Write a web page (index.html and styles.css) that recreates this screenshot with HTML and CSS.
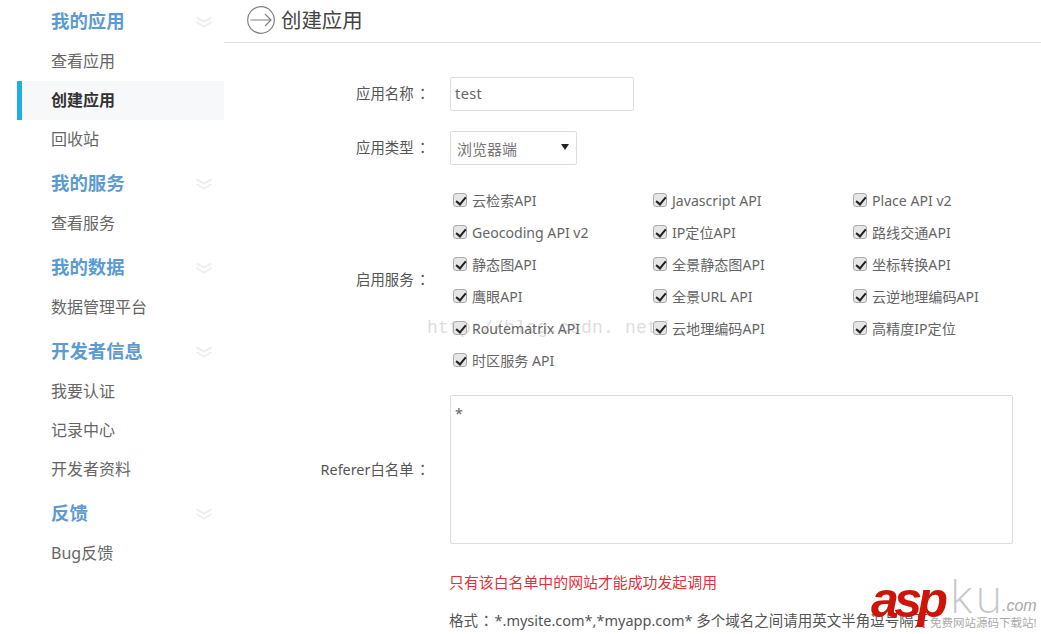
FILE: index.html
```html
<!DOCTYPE html>
<html lang="zh-CN">
<head>
<meta charset="utf-8">
<title>创建应用</title>
<link rel="stylesheet" href="styles.css">
</head>
<body>
<div class="page">
  <aside class="side">
    <div class="group first"><span>我的应用</span><svg class="chev" viewBox="0 0 18 12"><path d="M1.500 1.500l7.500 4 7.500-4M1.500 6l7.500 4.500 7.500-4.500"/></svg></div>
    <a class="item">查看应用</a>
    <a class="item active">创建应用</a>
    <a class="item">回收站</a>
    <div class="group"><span>我的服务</span><svg class="chev" viewBox="0 0 18 12"><path d="M1.500 1.500l7.500 4 7.500-4M1.500 6l7.500 4.500 7.500-4.500"/></svg></div>
    <a class="item">查看服务</a>
    <div class="group"><span>我的数据</span><svg class="chev" viewBox="0 0 18 12"><path d="M1.500 1.500l7.500 4 7.500-4M1.500 6l7.500 4.500 7.500-4.500"/></svg></div>
    <a class="item">数据管理平台</a>
    <div class="group"><span>开发者信息</span><svg class="chev" viewBox="0 0 18 12"><path d="M1.500 1.500l7.500 4 7.500-4M1.500 6l7.500 4.500 7.500-4.500"/></svg></div>
    <a class="item">我要认证</a>
    <a class="item">记录中心</a>
    <a class="item">开发者资料</a>
    <div class="group"><span>反馈</span><svg class="chev" viewBox="0 0 18 12"><path d="M1.500 1.500l7.500 4 7.500-4M1.500 6l7.500 4.500 7.500-4.500"/></svg></div>
    <a class="item">Bug反馈</a>
  </aside>
  <main class="main">
    <header class="head">
      <svg class="arrow" viewBox="0 0 28 28"><circle cx="14" cy="14" r="13.300"/><path d="M3.500 14h20.500M18 8l6 6-6 6"/></svg>
      <h1>创建应用</h1>
    </header>
    <form class="form">
      <label class="lab">应用名称<span class="colon" lang="zh-TW">：</span></label>
      <div class="ctl"><input class="txt" type="text" value="test"></div>
      <label class="lab">应用类型<span class="colon" lang="zh-TW">：</span></label>
      <div class="ctl"><div class="sel"><span>浏览器端</span><i class="caret"></i></div></div>
      <label class="lab">启用服务<span class="colon" lang="zh-TW">：</span></label>
      <div class="svc">
        <label class="chk"><input type="checkbox" checked>云检索API</label>
        <label class="chk"><input type="checkbox" checked>Javascript API</label>
        <label class="chk"><input type="checkbox" checked>Place API v2</label>
        <label class="chk"><input type="checkbox" checked>Geocoding API v2</label>
        <label class="chk"><input type="checkbox" checked>IP定位API</label>
        <label class="chk"><input type="checkbox" checked>路线交通API</label>
        <label class="chk"><input type="checkbox" checked>静态图API</label>
        <label class="chk"><input type="checkbox" checked>全景静态图API</label>
        <label class="chk"><input type="checkbox" checked>坐标转换API</label>
        <label class="chk"><input type="checkbox" checked>鹰眼API</label>
        <label class="chk"><input type="checkbox" checked>全景URL API</label>
        <label class="chk"><input type="checkbox" checked>云逆地理编码API</label>
        <label class="chk"><input type="checkbox" checked>Routematrix API</label>
        <label class="chk"><input type="checkbox" checked>云地理编码API</label>
        <label class="chk"><input type="checkbox" checked>高精度IP定位</label>
        <label class="chk"><input type="checkbox" checked>时区服务 API</label>
      </div>
      <label class="lab">Referer白名单<span class="colon" lang="zh-TW">：</span></label>
      <div class="ctl"><textarea class="area">*</textarea></div>
      <div class="notes">
        <p class="warn">只有该白名单中的网站才能成功发起调用</p>
        <p class="fmt">格式<span class="colon" lang="zh-TW">：</span>*.mysite.com*,*myapp.com* 多个域名之间请用英文半角逗号隔开</p>
      </div>
    </form>
  </main>
</div>
<div class="mark">http://blog.csdn. net/</div>
<div class="logo"><span class="ku">ku</span><span class="com">.com</span><span class="tag">免费网站源码下载站!</span><span class="asp">asp</span></div>
</body>
</html>
```
FILE: styles.css
```css
* { box-sizing: border-box; }
html, body { margin: 0; height: 634px; overflow: hidden; background: #fff; }
body { font-family: "Noto Sans", "Noto Sans CJK SC", sans-serif; color: #555; position: relative; }
.page { display: flex; position: relative; z-index: 1; width: 1041px; height: 634px; }
.side { width: 224px; flex: none; padding-left: 17px; }
.group { height: 45px; padding: 4px 11px 2px 34px; display: flex; align-items: center; justify-content: space-between; color: #5c9bd1; font-size: 18.400px; font-weight: 700; }
.group.first { height: 41.5px; padding-top: 0; }
.chev { width: 18px; height: 12px; margin-top: 4px; fill: none; stroke: #efefef; stroke-width: 2; }
.item { display: flex; align-items: center; height: 39px; padding: 0 0 2px 34px; font-size: 16px; color: #666; }
.item.active { background: #f6f8f9; border-left: 5px solid #1cafe0; padding-left: 29px; color: #333; font-weight: 700; }
.main { flex: 1; min-width: 0; }
.head { height: 43px; border-bottom: 1px solid #e0e0e0; display: flex; align-items: center; gap: 6px; padding: 0 0 3px 23px; }
.arrow { width: 28px; height: 28px; fill: none; stroke: #808080; stroke-width: 1.200; }
.head h1 { margin: 0 0 1px; font-size: 20.400px; font-weight: 400; color: #444; }
.form { display: grid; grid-template-columns: 206px 1fr; column-gap: 20px; row-gap: 20px; padding-top: 34px; align-items: center; }
.lab { text-align: right; font-size: 14.400px; color: #555; padding-bottom: 4px; }
.colon { font-family: "Noto Sans CJK TC", sans-serif; margin-left: 2px; }
.ctl { display: flex; }
.txt { width: 184px; height: 34px; border: 1px solid #ddd; border-radius: 2px; padding: 0 4px 3px; font: 14.500px "Noto Sans", sans-serif; letter-spacing: .4px; color: #666; }
.sel { width: 127px; height: 34px; border: 1px solid #ddd; border-radius: 2px; display: flex; align-items: center; justify-content: space-between; padding: 0 7px 0 6px; font-size: 15px; color: #777; }
.caret { width: 0; height: 0; margin-bottom: 2px; border: 4px solid transparent; border-top: 6px solid #222; border-bottom: 0; }
.svc { display: grid; grid-template-columns: repeat(3, 200px); grid-auto-rows: 32px; margin-top: -1px; }
.chk { display: flex; align-items: center; gap: 5px; padding-left: 3px; font-size: 14.100px; white-space: nowrap; color: #666; }
.chk input { appearance: none; position: relative; flex: none; margin: 0; width: 14px; height: 14px; background: #e6e6e6; border: 1px solid #aaa; border-radius: 3px; }
.chk input::after { content: ""; position: absolute; left: 4px; top: 1px; width: 4px; height: 8px; border: solid #222; border-width: 0 2px 2px 0; transform: rotate(40deg); }
.area { display: block; width: 563px; height: 149px; margin-top: -1px; border: 1px solid #ddd; border-radius: 2px; padding: 8px 4px; font: 14px "Noto Sans", sans-serif; color: #666; resize: none; }
.notes { grid-column: 2; margin: 8px 0 0 -1px; }
.warn { margin: 0; font-size: 14.900px; color: #e3313a; line-height: 20px; }
.fmt { margin: 18px 0 0; font-size: 14.500px; color: #555; line-height: 20px; white-space: nowrap; }
.fmt .colon { margin: 0 1px; }
.mark { position: absolute; left: 427px; top: 318px; font: 18px "Liberation Mono", monospace; letter-spacing: .2px; color: #dedede; pointer-events: none; }
.logo { position: absolute; z-index: 2; left: 870px; top: 578px; width: 171px; height: 56px; }
.asp { position: absolute; left: 1px; top: -7px; font: italic 700 50px "Liberation Sans", sans-serif; color: #cc1408; letter-spacing: -4.500px; }
.ku { position: absolute; left: 80px; top: -10px; font: 200 46px "Inter", sans-serif; color: #c8c8c8; letter-spacing: 2px; }
.com { position: absolute; left: 132px; top: 19px; font: italic 300 16px "Liberation Sans", sans-serif; color: #aaa; }
.tag { position: absolute; left: 60px; top: 36px; font-size: 11.500px; color: #aaa; white-space: nowrap; }
```
